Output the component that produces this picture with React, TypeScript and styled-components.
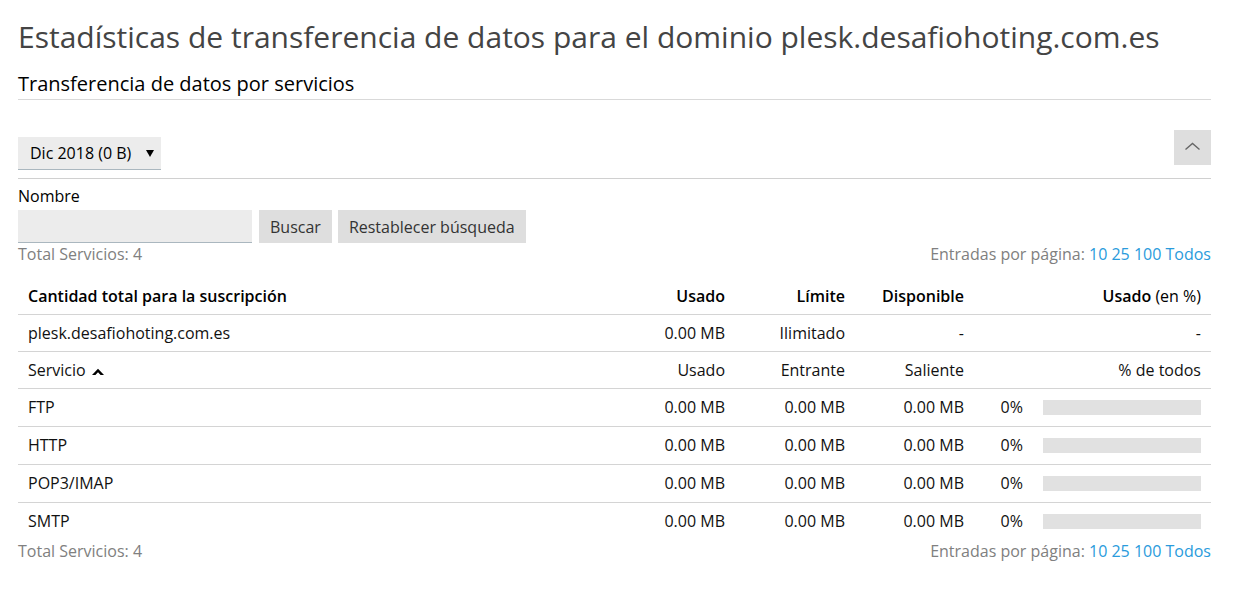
import React, { useState } from "react";
import styled, { createGlobalStyle } from "styled-components";

const GlobalStyle = createGlobalStyle`
  *, *::before, *::after { box-sizing: border-box; }
  body {
    margin: 0;
    background: #fff;
    color: #111;
    font: 16px/22px "Open Sans", "Noto Sans", sans-serif;
  }
  button, input, select { font: inherit; color: inherit; }
`;

const Page = styled.main`
  padding: 15px 25px 24px 18px;
`;

const Title = styled.h1`
  margin: 0;
  color: #444;
  font-size: 30px;
  line-height: 44px;
  font-weight: 400;
`;

const SectionTitle = styled.h2`
  margin: 11px 0 0;
  padding-bottom: 1px;
  border-bottom: 1px solid #d9d9d9;
  color: #000;
  font-size: 20px;
  line-height: 28px;
  font-weight: 400;
`;

const Toolbar = styled.div`
  display: flex;
  justify-content: space-between;
  align-items: flex-end;
  margin-top: 30px;
  padding-bottom: 8px;
  border-bottom: 1px solid #d0d0d0;
`;

const SelectBox = styled.div`
  display: grid;
  align-items: center;
  width: 143px;
`;

const Select = styled.select`
  grid-area: 1 / 1;
  width: 100%;
  height: 33px;
  padding: 0 24px 0 12px;
  border: 0;
  border-bottom: 1px solid #aab7bf;
  border-radius: 0;
  background: #ececec;
  color: #000;
  appearance: none;
`;

const SelectArrow = styled.svg`
  grid-area: 1 / 1;
  justify-self: end;
  margin-right: 7px;
  pointer-events: none;
`;

const CollapseButton = styled.button`
  display: grid;
  justify-items: center;
  align-content: start;
  width: 37px;
  height: 35px;
  margin-bottom: 5px;
  padding: 12px 0 0;
  border: 0;
  background: #dedede;
`;

const SearchForm = styled.form`
  padding-top: 6px;
`;

const Label = styled.label`
  display: block;
  color: #000;
`;

const SearchRow = styled.div`
  display: flex;
  gap: 6px;
  margin-top: 3px;
`;

const SearchInput = styled.input`
  width: 234px;
  height: 33px;
  margin-right: 1px;
  padding: 0 10px;
  border: 0;
  border-bottom: 1px solid #aab7bf;
  border-radius: 0;
  background: #ececec;
`;

const Button = styled.button`
  height: 33px;
  padding: 0 11px;
  border: 0;
  background: #dedede;
  color: #333;
`;

const PagerBar = styled.div`
  display: flex;
  justify-content: space-between;
  color: #808080;
`;

const PageLink = styled.a`
  color: #2a9bdc;
  text-decoration: none;
`;

const Table = styled.table`
  width: 100%;
  margin-top: 13px;
  border-collapse: separate;
  border-spacing: 0;
  table-layout: fixed;

  tbody tr:last-child td {
    height: 37px;
    border-bottom: 0;
  }
`;

const Col = styled.col<{ $width?: number }>`
  width: ${(p) => (p.$width ? `${p.$width}px` : "auto")};
`;

const Cell = styled.td<{ $start?: boolean; $tall?: boolean }>`
  height: ${(p) => (p.$tall ? 38 : 37)}px;
  padding: 7px 10px;
  border-bottom: 1px solid #d4d4d4;
  text-align: ${(p) => (p.$start ? "left" : "right")};
  vertical-align: top;
  font-weight: 400;
`;

const HeadCell = styled(Cell)`
  color: #000;
  font-weight: 600;
`;

const Light = styled.span`
  font-weight: 400;
`;

const SortIcon = styled.svg`
  margin-left: 6px;
`;

const Meter = styled.div`
  height: 15px;
  margin-top: 4px;
  background: #e1e1e1;
`;

const MeterFill = styled.div`
  height: 100%;
  background: #2a9bdc;
`;

const services = [
  { name: "FTP", used: "0.00 MB", incoming: "0.00 MB", outgoing: "0.00 MB", percent: 0 },
  { name: "HTTP", used: "0.00 MB", incoming: "0.00 MB", outgoing: "0.00 MB", percent: 0 },
  { name: "POP3/IMAP", used: "0.00 MB", incoming: "0.00 MB", outgoing: "0.00 MB", percent: 0 },
  { name: "SMTP", used: "0.00 MB", incoming: "0.00 MB", outgoing: "0.00 MB", percent: 0 },
];

const pageSizes = ["10", "25", "100", "Todos"];

function Pager() {
  return (
    <PagerBar>
      <span>Total Servicios: {services.length}</span>
      <span>
        Entradas por página:
        {pageSizes.map((size) => (
          <React.Fragment key={size}>
            {" "}
            <PageLink href={`#${size}`}>{size}</PageLink>
          </React.Fragment>
        ))}
      </span>
    </PagerBar>
  );
}

export default function App() {
  const [query, setQuery] = useState("");

  return (
    <>
      <GlobalStyle />
      <Page>
        <Title>Estadísticas de transferencia de datos para el dominio plesk.desafiohoting.com.es</Title>
        <SectionTitle>Transferencia de datos por servicios</SectionTitle>

        <Toolbar>
          <SelectBox>
            <Select aria-label="Mes">
              <option>Dic 2018 (0 B)</option>
            </Select>
            <SelectArrow width="8" height="7" viewBox="0 0 8 7" aria-hidden="true">
              <path d="M0 0h8L4 7z" fill="#000" />
            </SelectArrow>
          </SelectBox>
          <CollapseButton type="button" aria-label="Ocultar búsqueda">
            <svg width="15" height="9" viewBox="0 0 15 9" aria-hidden="true">
              <path d="M0.500 7.500L7.500 1.500L14.500 7.500" fill="none" stroke="#666" strokeWidth="1.4" />
            </svg>
          </CollapseButton>
        </Toolbar>

        <SearchForm onSubmit={(e) => e.preventDefault()}>
          <Label htmlFor="name">Nombre</Label>
          <SearchRow>
            <SearchInput id="name" type="text" value={query} onChange={(e) => setQuery(e.target.value)} />
            <Button type="submit">Buscar</Button>
            <Button type="button" onClick={() => setQuery("")}>Restablecer búsqueda</Button>
          </SearchRow>
        </SearchForm>

        <Pager />
        <Table>
          <colgroup>
            <Col />
            <Col $width={120} />
            <Col $width={120} />
            <Col $width={119} />
            <Col $width={59} />
            <Col $width={178} />
          </colgroup>
          <thead>
            <tr>
              <HeadCell as="th" scope="col" $start>Cantidad total para la suscripción</HeadCell>
              <HeadCell as="th" scope="col">Usado</HeadCell>
              <HeadCell as="th" scope="col">Límite</HeadCell>
              <HeadCell as="th" scope="col">Disponible</HeadCell>
              <HeadCell as="th" scope="col" colSpan={2}>Usado <Light>(en %)</Light></HeadCell>
            </tr>
          </thead>
          <tbody>
            <tr>
              <Cell $start>plesk.desafiohoting.com.es</Cell>
              <Cell>0.00 MB</Cell>
              <Cell>Ilimitado</Cell>
              <Cell>-</Cell>
              <Cell colSpan={2}>-</Cell>
            </tr>
            <tr>
              <Cell as="th" scope="col" $start>
                Servicio
                <SortIcon width="12" height="8" viewBox="0 0 12 8" aria-hidden="true">
                  <path d="M0 7L6 0.800L12 7H8.600L6 4.300L3.400 7z" fill="#000" />
                </SortIcon>
              </Cell>
              <Cell as="th" scope="col">Usado</Cell>
              <Cell as="th" scope="col">Entrante</Cell>
              <Cell as="th" scope="col">Saliente</Cell>
              <Cell as="th" scope="col" colSpan={2}>% de todos</Cell>
            </tr>
            {services.map((s) => (
              <tr key={s.name}>
                <Cell $start $tall>{s.name}</Cell>
                <Cell $tall>{s.used}</Cell>
                <Cell $tall>{s.incoming}</Cell>
                <Cell $tall>{s.outgoing}</Cell>
                <Cell $tall>{s.percent}%</Cell>
                <Cell $tall>
                  <Meter>
                    <MeterFill style={{ width: `${s.percent}%` }} />
                  </Meter>
                </Cell>
              </tr>
            ))}
          </tbody>
        </Table>
        <Pager />
      </Page>
    </>
  );
}
